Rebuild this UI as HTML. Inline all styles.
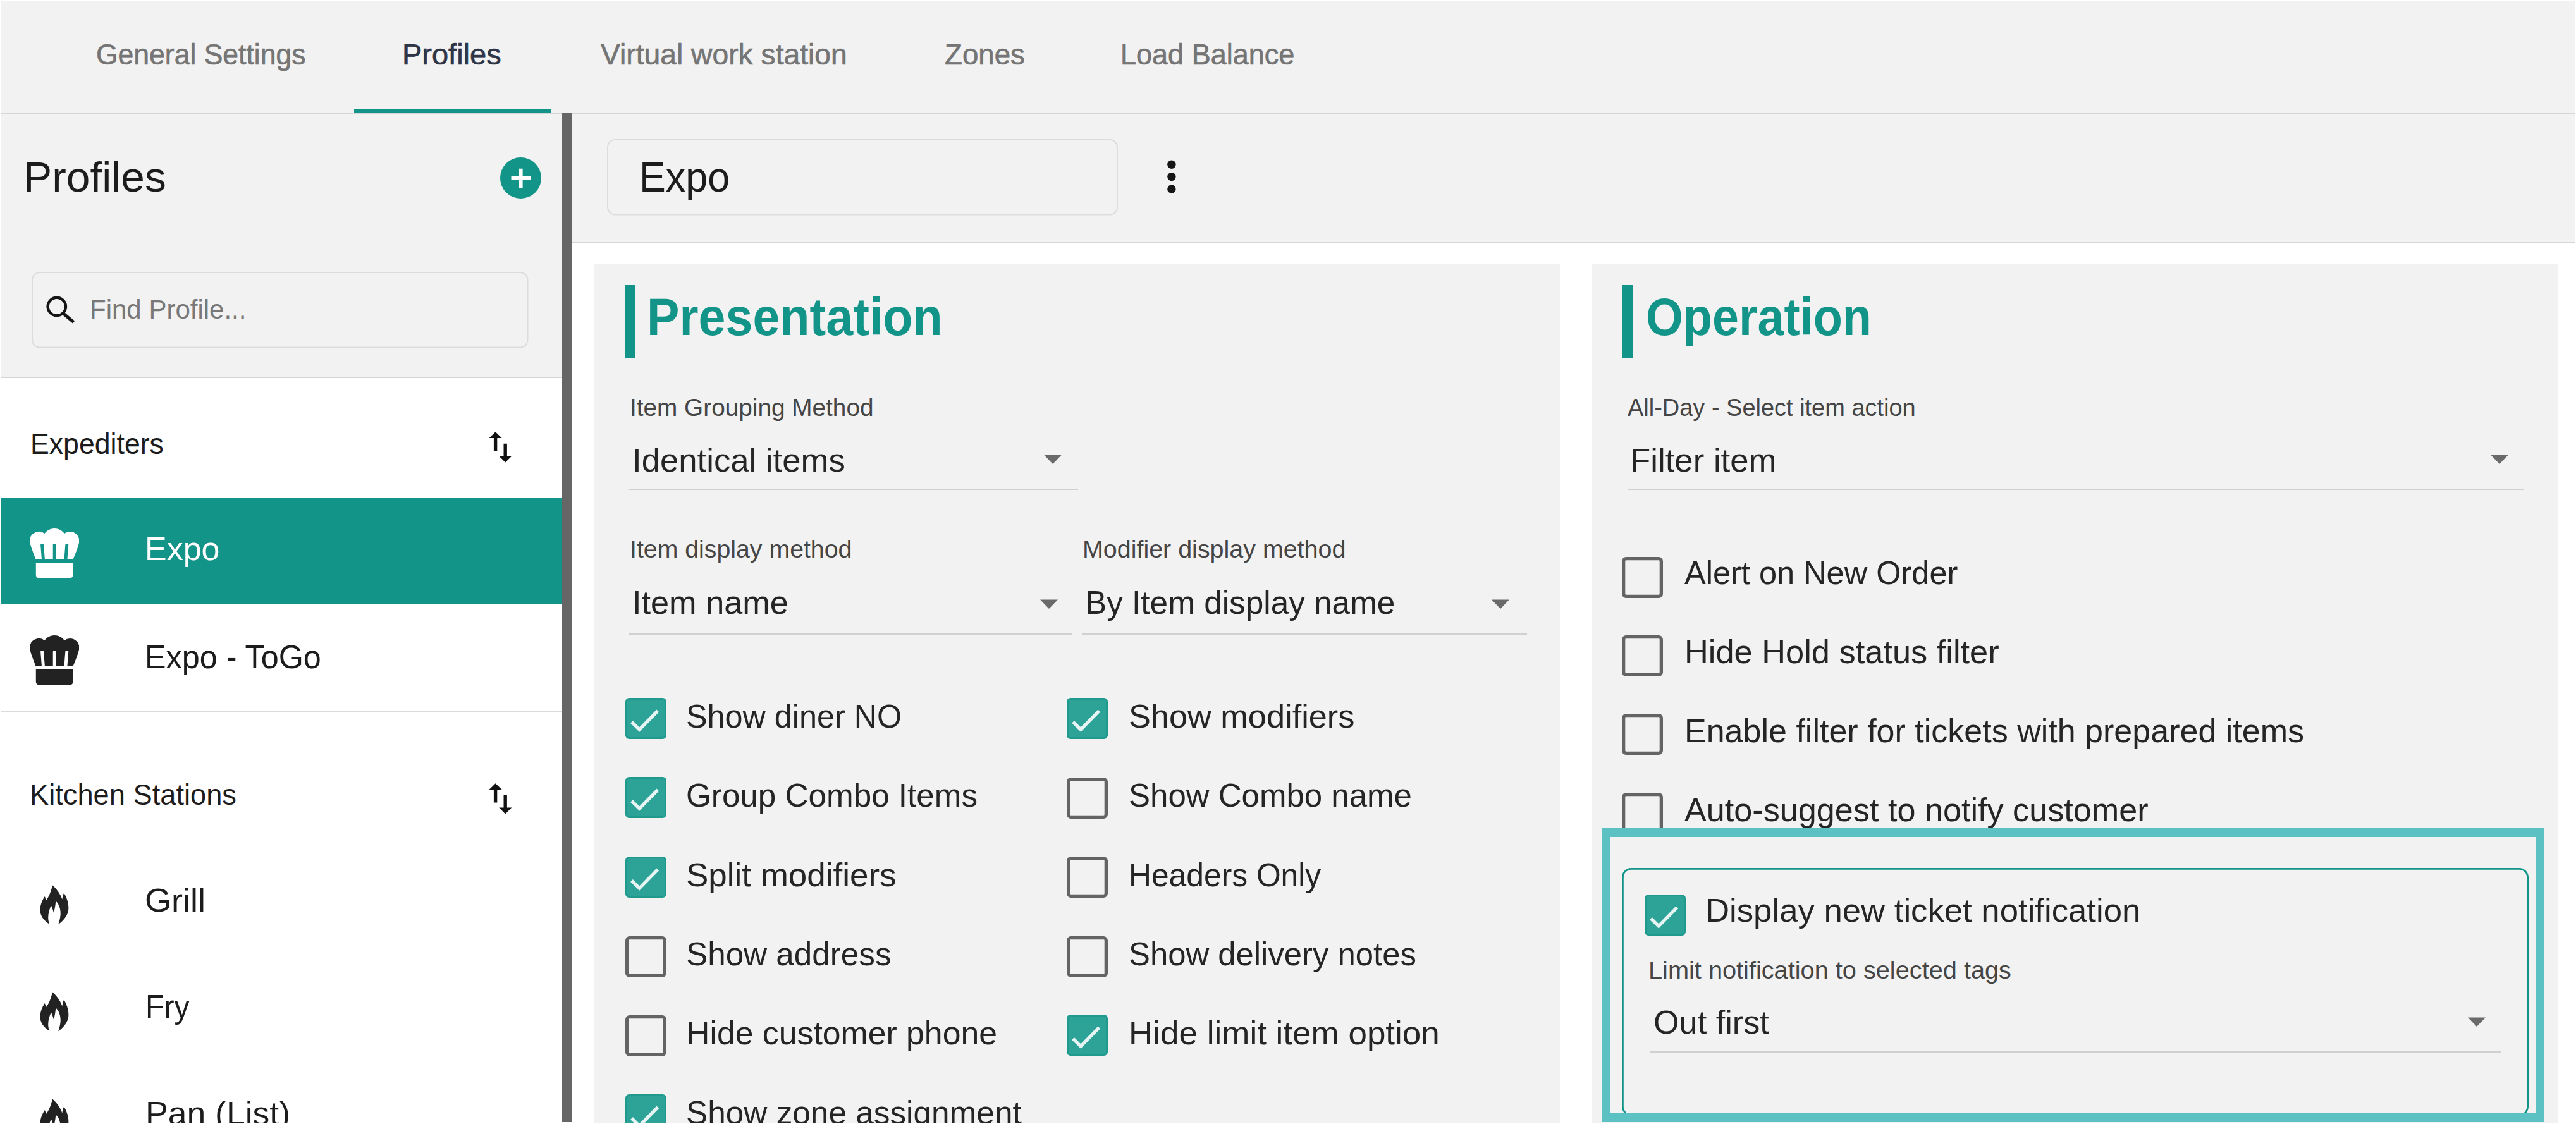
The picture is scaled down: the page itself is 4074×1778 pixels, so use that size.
<!DOCTYPE html>
<html><head><meta charset="utf-8"><title>Profiles</title>
<style>
html,body{margin:0;padding:0;background:#fff;}
body{width:4074px;height:1778px;position:relative;overflow:hidden;font-family:"Liberation Sans",sans-serif;}
.t{position:absolute;white-space:nowrap;line-height:1;transform-origin:0 0;}
</style></head><body>
<div style="position:absolute;left:2px;top:1.2px;width:4070.3px;height:1774px;background:#f2f2f2"></div>
<div style="position:absolute;left:2px;top:178.7px;width:4070px;height:2.7px;background:#d6d6d6"></div>
<div style="position:absolute;left:560px;top:172.7px;width:311px;height:5.6px;background:#129488"></div>
<div style="position:absolute;left:2px;top:598px;width:887px;height:1177.5px;background:#fff"></div>
<div style="position:absolute;left:2px;top:595.7px;width:887px;height:2.7px;background:#d6d6d6"></div>
<div style="position:absolute;left:904px;top:385px;width:3168px;height:1390.5px;background:#fff"></div>
<div style="position:absolute;left:904px;top:382.7px;width:3168px;height:2.7px;background:#d6d6d6"></div>
<div style="position:absolute;left:889px;top:178.4px;width:14.8px;height:1597.1px;background:#666"></div>
<div style="position:absolute;left:939.6px;top:418px;width:1527.9px;height:1357.5px;background:#f2f2f2"></div>
<div style="position:absolute;left:2518.4px;top:418px;width:1528.1px;height:1357.5px;background:#f2f2f2"></div>
<svg style="position:absolute;left:791.3px;top:249px" width="65" height="65" viewBox="0 0 65 65"><circle cx="32.5" cy="32.5" r="32.5" fill="#129488"/><path d="M17.5 32.8h30.5M32.8 17.8v30.5" stroke="#fff" stroke-width="5.6" fill="none"/></svg>
<svg style="position:absolute;left:48.5px;top:429px" width="787.5" height="122.5" viewBox="-1 -1 787.5 122.5"><rect x="1.0" y="1.0" width="783.5" height="118.5" rx="12" fill="none" stroke="#dcdcdc" stroke-width="2"/></svg>
<svg style="position:absolute;left:70px;top:465px" width="52" height="50" viewBox="70 465 52 50"><circle cx="89.8" cy="485" r="14.2" fill="none" stroke="#151515" stroke-width="4.4"/><path d="M100.3 496L116.6 509.6" stroke="#151515" stroke-width="5" fill="none"/></svg>
<div style="position:absolute;left:2px;top:788px;width:887px;height:168px;background:#129488"></div>
<div style="position:absolute;left:2px;top:1125px;width:887px;height:2px;background:#dcdcdc"></div>
<svg style="position:absolute;left:770px;top:680px" width="44" height="52" viewBox="770 680 44 52"><path d="M783.6 683.2L793.6 693H786.3V713.5H780.9V693H773.6Z M799.2 731.6L789.2 721.6H796.5V701.8H801.9V721.6H809.2Z" fill="#111"/></svg>
<svg style="position:absolute;left:770px;top:1235.8px" width="44" height="52" viewBox="770 680 44 52"><path d="M783.6 683.2L793.6 693H786.3V713.5H780.9V693H773.6Z M799.2 731.6L789.2 721.6H796.5V701.8H801.9V721.6H809.2Z" fill="#111"/></svg>
<svg style="position:absolute;left:47.1px;top:835.6px" width="78.4" height="78.4" viewBox="0 0 512 512"><path d="M416 32a95.17 95.17 0 0 0-57.73 19.74C334.93 20.5 298 0 256 0s-78.93 20.5-102.27 51.74A95.56 95.56 0 0 0 0 128c0 41.74 64 192 64 192h60.09L112 169.25a8 8 0 0 1 7.33-8.61l16-1.28a8 8 0 0 1 8.61 7.33L156.2 320H240V168a8 8 0 0 1 8-8h16a8 8 0 0 1 8 8v152h83.8l12.27-153.31a8 8 0 0 1 8.61-7.33l16 1.28a8 8 0 0 1 7.33 8.61L387.91 320H448s64-150.26 64-192a96 96 0 0 0-96-96zM64 480a32 32 0 0 0 32 32h320a32 32 0 0 0 32-32V352H64z" fill="#fff"/></svg>
<svg style="position:absolute;left:47.1px;top:1004.7px" width="78.4" height="78.4" viewBox="0 0 512 512"><path d="M416 32a95.17 95.17 0 0 0-57.73 19.74C334.93 20.5 298 0 256 0s-78.93 20.5-102.27 51.74A95.56 95.56 0 0 0 0 128c0 41.74 64 192 64 192h60.09L112 169.25a8 8 0 0 1 7.33-8.61l16-1.28a8 8 0 0 1 8.61 7.33L156.2 320H240V168a8 8 0 0 1 8-8h16a8 8 0 0 1 8 8v152h83.8l12.27-153.31a8 8 0 0 1 8.61-7.33l16 1.28a8 8 0 0 1 7.33 8.61L387.91 320H448s64-150.26 64-192a96 96 0 0 0-96-96zM64 480a32 32 0 0 0 32 32h320a32 32 0 0 0 32-32V352H64z" fill="#222"/></svg>
<svg style="position:absolute;left:63px;top:1400.3px" width="46.5" height="63.5" viewBox="372 224 522 714"><path d="M595 228 C640 270 700 330 740 410 C755 440 765 465 768 480 C775 440 785 400 800 365 C840 430 880 520 882 620 C884 720 840 820 700 925 C730 840 745 760 738 690 C730 610 700 550 655 508 C650 570 640 650 618 712 C605 670 590 620 572 588 C545 650 520 730 520 800 C520 850 530 890 545 922 C440 860 372 760 376 660 C380 570 420 480 460 425 C468 450 478 472 490 492 C530 430 575 340 595 228Z" fill="#222"/></svg>
<svg style="position:absolute;left:63px;top:1568.8999999999999px" width="46.5" height="63.5" viewBox="372 224 522 714"><path d="M595 228 C640 270 700 330 740 410 C755 440 765 465 768 480 C775 440 785 400 800 365 C840 430 880 520 882 620 C884 720 840 820 700 925 C730 840 745 760 738 690 C730 610 700 550 655 508 C650 570 640 650 618 712 C605 670 590 620 572 588 C545 650 520 730 520 800 C520 850 530 890 545 922 C440 860 372 760 376 660 C380 570 420 480 460 425 C468 450 478 472 490 492 C530 430 575 340 595 228Z" fill="#222"/></svg>
<svg style="position:absolute;left:63px;top:1737.5px" width="46.5" height="63.5" viewBox="372 224 522 714"><path d="M595 228 C640 270 700 330 740 410 C755 440 765 465 768 480 C775 440 785 400 800 365 C840 430 880 520 882 620 C884 720 840 820 700 925 C730 840 745 760 738 690 C730 610 700 550 655 508 C650 570 640 650 618 712 C605 670 590 620 572 588 C545 650 520 730 520 800 C520 850 530 890 545 922 C440 860 372 760 376 660 C380 570 420 480 460 425 C468 450 478 472 490 492 C530 430 575 340 595 228Z" fill="#222"/></svg>
<svg style="position:absolute;left:959.2px;top:219px" width="810" height="122.5" viewBox="-1 -1 810 122.5"><rect x="1.0" y="1.0" width="806" height="118.5" rx="12" fill="none" stroke="#dcdcdc" stroke-width="2"/></svg>
<svg style="position:absolute;left:1840px;top:250px" width="26" height="60" viewBox="1840 250 26 60"><circle cx="1852.9" cy="260.3" r="6.7" fill="#161616"/><circle cx="1852.9" cy="279.6" r="6.7" fill="#161616"/><circle cx="1852.9" cy="299" r="6.7" fill="#161616"/></svg>
<div style="position:absolute;left:989px;top:451px;width:15.5px;height:114.5px;background:#129488"></div>
<div style="position:absolute;left:2565px;top:451px;width:17.5px;height:114.5px;background:#129488"></div>
<div style="position:absolute;left:995px;top:773.3px;width:709.5999999999999px;height:2px;background:#d0d0d0"></div><svg style="position:absolute;left:1650px;top:719px" width="30" height="16" viewBox="0 0 30 16"><path d="M1 0.5H29L15 15Z" fill="#6a6a6a"/></svg>
<div style="position:absolute;left:995px;top:1002.3px;width:701px;height:2px;background:#d0d0d0"></div><svg style="position:absolute;left:1643.5px;top:948px" width="30" height="16" viewBox="0 0 30 16"><path d="M1 0.5H29L15 15Z" fill="#6a6a6a"/></svg>
<div style="position:absolute;left:1711px;top:1002.3px;width:703.5px;height:2px;background:#d0d0d0"></div><svg style="position:absolute;left:2358px;top:948px" width="30" height="16" viewBox="0 0 30 16"><path d="M1 0.5H29L15 15Z" fill="#6a6a6a"/></svg>
<div style="position:absolute;left:2574px;top:773.3px;width:1416.5px;height:2px;background:#d0d0d0"></div><svg style="position:absolute;left:3938px;top:719px" width="30" height="16" viewBox="0 0 30 16"><path d="M1 0.5H29L15 15Z" fill="#6a6a6a"/></svg>
<div style="position:absolute;left:2610px;top:1662.8px;width:1344.8000000000002px;height:2px;background:#d0d0d0"></div><svg style="position:absolute;left:3902px;top:1608.5px" width="30" height="16" viewBox="0 0 30 16"><path d="M1 0.5H29L15 15Z" fill="#6a6a6a"/></svg>
<svg style="position:absolute;left:989.4px;top:1104.1px" width="65" height="65" viewBox="0 0 65 65"><rect x="1.5" y="1.5" width="62" height="62" rx="4.5" fill="#2da397" stroke="#1f9a8d" stroke-width="3"/><path d="M10 38L22.2 50L51.3 20.3" stroke="#e6f5f3" stroke-width="5.3" fill="none"/></svg>
<svg style="position:absolute;left:989.4px;top:1229.3999999999999px" width="65" height="65" viewBox="0 0 65 65"><rect x="1.5" y="1.5" width="62" height="62" rx="4.5" fill="#2da397" stroke="#1f9a8d" stroke-width="3"/><path d="M10 38L22.2 50L51.3 20.3" stroke="#e6f5f3" stroke-width="5.3" fill="none"/></svg>
<svg style="position:absolute;left:989.4px;top:1354.6999999999998px" width="65" height="65" viewBox="0 0 65 65"><rect x="1.5" y="1.5" width="62" height="62" rx="4.5" fill="#2da397" stroke="#1f9a8d" stroke-width="3"/><path d="M10 38L22.2 50L51.3 20.3" stroke="#e6f5f3" stroke-width="5.3" fill="none"/></svg>
<svg style="position:absolute;left:988.4px;top:1479.5px" width="67" height="67" viewBox="-1 -1 67 67"><rect x="2.65" y="2.65" width="59.7" height="59.7" rx="4" fill="none" stroke="#646464" stroke-width="5.3"/></svg>
<svg style="position:absolute;left:988.4px;top:1604.8px" width="67" height="67" viewBox="-1 -1 67 67"><rect x="2.65" y="2.65" width="59.7" height="59.7" rx="4" fill="none" stroke="#646464" stroke-width="5.3"/></svg>
<svg style="position:absolute;left:989.4px;top:1730.6px" width="65" height="65" viewBox="0 0 65 65"><rect x="1.5" y="1.5" width="62" height="62" rx="4.5" fill="#2da397" stroke="#1f9a8d" stroke-width="3"/><path d="M10 38L22.2 50L51.3 20.3" stroke="#e6f5f3" stroke-width="5.3" fill="none"/></svg>
<svg style="position:absolute;left:1687px;top:1104.1px" width="65" height="65" viewBox="0 0 65 65"><rect x="1.5" y="1.5" width="62" height="62" rx="4.5" fill="#2da397" stroke="#1f9a8d" stroke-width="3"/><path d="M10 38L22.2 50L51.3 20.3" stroke="#e6f5f3" stroke-width="5.3" fill="none"/></svg>
<svg style="position:absolute;left:1686px;top:1228.8999999999999px" width="67" height="67" viewBox="-1 -1 67 67"><rect x="2.65" y="2.65" width="59.7" height="59.7" rx="4" fill="none" stroke="#646464" stroke-width="5.3"/></svg>
<svg style="position:absolute;left:1686px;top:1354.1999999999998px" width="67" height="67" viewBox="-1 -1 67 67"><rect x="2.65" y="2.65" width="59.7" height="59.7" rx="4" fill="none" stroke="#646464" stroke-width="5.3"/></svg>
<svg style="position:absolute;left:1686px;top:1479.5px" width="67" height="67" viewBox="-1 -1 67 67"><rect x="2.65" y="2.65" width="59.7" height="59.7" rx="4" fill="none" stroke="#646464" stroke-width="5.3"/></svg>
<svg style="position:absolute;left:1687px;top:1605.3px" width="65" height="65" viewBox="0 0 65 65"><rect x="1.5" y="1.5" width="62" height="62" rx="4.5" fill="#2da397" stroke="#1f9a8d" stroke-width="3"/><path d="M10 38L22.2 50L51.3 20.3" stroke="#e6f5f3" stroke-width="5.3" fill="none"/></svg>
<svg style="position:absolute;left:2564px;top:879.6px" width="67" height="67" viewBox="-1 -1 67 67"><rect x="2.65" y="2.65" width="59.7" height="59.7" rx="4" fill="none" stroke="#646464" stroke-width="5.3"/></svg>
<svg style="position:absolute;left:2564px;top:1004.0px" width="67" height="67" viewBox="-1 -1 67 67"><rect x="2.65" y="2.65" width="59.7" height="59.7" rx="4" fill="none" stroke="#646464" stroke-width="5.3"/></svg>
<svg style="position:absolute;left:2564px;top:1128.4px" width="67" height="67" viewBox="-1 -1 67 67"><rect x="2.65" y="2.65" width="59.7" height="59.7" rx="4" fill="none" stroke="#646464" stroke-width="5.3"/></svg>
<svg style="position:absolute;left:2564px;top:1252.8000000000002px" width="67" height="67" viewBox="-1 -1 67 67"><rect x="2.65" y="2.65" width="59.7" height="59.7" rx="4" fill="none" stroke="#646464" stroke-width="5.3"/></svg>
<svg style="position:absolute;left:2564px;top:1372.3px" width="1436" height="394.5" viewBox="-1 -1 1436 394.5"><rect x="1.4" y="1.4" width="1431.2" height="389.7" rx="13.5" fill="none" stroke="#129488" stroke-width="2.8"/></svg>
<svg style="position:absolute;left:2601px;top:1415px" width="65" height="65" viewBox="0 0 65 65"><rect x="1.5" y="1.5" width="62" height="62" rx="4.5" fill="#2da397" stroke="#1f9a8d" stroke-width="3"/><path d="M10 38L22.2 50L51.3 20.3" stroke="#e6f5f3" stroke-width="5.3" fill="none"/></svg>
<span class="t" style="left:151.91px;top:61.71px;font-size:47px;color:#757575;font-weight:400;transform:scaleX(0.9468);-webkit-text-stroke:0.7px #757575">General Settings</span>
<span class="t" style="left:635.83px;top:61.71px;font-size:47px;color:#2e3547;font-weight:400;transform:scaleX(0.9995);-webkit-text-stroke:0.7px #2e3547">Profiles</span>
<span class="t" style="left:950.30px;top:61.71px;font-size:47px;color:#757575;font-weight:400;transform:scaleX(0.9838);-webkit-text-stroke:0.7px #757575">Virtual work station</span>
<span class="t" style="left:1493.57px;top:61.71px;font-size:47px;color:#757575;font-weight:400;transform:scaleX(0.9711);-webkit-text-stroke:0.7px #757575">Zones</span>
<span class="t" style="left:1772.48px;top:61.71px;font-size:47px;color:#757575;font-weight:400;transform:scaleX(0.9578);-webkit-text-stroke:0.7px #757575">Load Balance</span>
<span class="t" style="left:37.01px;top:245.98px;font-size:67px;color:#1c1c1c;font-weight:400;transform:scaleX(1.0112)">Profiles</span>
<span class="t" style="left:141.72px;top:467.60px;font-size:43px;color:#787878;font-weight:400;transform:scaleX(0.9769)">Find Profile...</span>
<span class="t" style="left:47.51px;top:677.51px;font-size:47px;color:#1c1c1c;font-weight:400;transform:scaleX(0.9497)">Expediters</span>
<span class="t" style="left:229.14px;top:841.68px;font-size:52px;color:#ffffff;font-weight:400;transform:scaleX(0.9995)">Expo</span>
<span class="t" style="left:229.27px;top:1012.98px;font-size:52px;color:#1c1c1c;font-weight:400;transform:scaleX(0.9680)">Expo - ToGo</span>
<span class="t" style="left:47.47px;top:1233.21px;font-size:47px;color:#1c1c1c;font-weight:400;transform:scaleX(0.9626)">Kitchen Stations</span>
<span class="t" style="left:229.47px;top:1397.98px;font-size:52px;color:#1c1c1c;font-weight:400;transform:scaleX(1.0398)">Grill</span>
<span class="t" style="left:230.22px;top:1565.98px;font-size:52px;color:#1c1c1c;font-weight:400;transform:scaleX(0.9293)">Fry</span>
<span class="t" style="left:229.82px;top:1734.98px;font-size:52px;color:#1c1c1c;font-weight:400;transform:scaleX(1.0289)">Pan (List)</span>
<span class="t" style="left:1010.50px;top:245.88px;font-size:67px;color:#1c1c1c;font-weight:400;transform:scaleX(0.9367)">Expo</span>
<span class="t" style="left:1022.57px;top:460.36px;font-size:82.5px;color:#129488;font-weight:700;transform:scaleX(0.9359)">Presentation</span>
<span class="t" style="left:996.37px;top:624.56px;font-size:39.5px;color:#454545;font-weight:400;transform:scaleX(0.9809)">Item Grouping Method</span>
<span class="t" style="left:1000.18px;top:702.48px;font-size:52px;color:#252525;font-weight:400;transform:scaleX(1.0132)">Identical items</span>
<span class="t" style="left:996.33px;top:848.56px;font-size:39.5px;color:#454545;font-weight:400;transform:scaleX(0.9941)">Item display method</span>
<span class="t" style="left:1000.22px;top:927.48px;font-size:52px;color:#252525;font-weight:400;transform:scaleX(1.0051)">Item name</span>
<span class="t" style="left:1712.42px;top:848.56px;font-size:39.5px;color:#454545;font-weight:400;transform:scaleX(0.9982)">Modifier display method</span>
<span class="t" style="left:1716.29px;top:927.48px;font-size:52px;color:#252525;font-weight:400;transform:scaleX(0.9865)">By Item display name</span>
<span class="t" style="left:1084.60px;top:1107.18px;font-size:52px;color:#252525;font-weight:400;transform:scaleX(0.9676)">Show diner NO</span>
<span class="t" style="left:1084.60px;top:1232.48px;font-size:52px;color:#252525;font-weight:400;transform:scaleX(0.9847)">Group Combo Items</span>
<span class="t" style="left:1084.60px;top:1357.78px;font-size:52px;color:#252525;font-weight:400;transform:scaleX(1.0184)">Split modifiers</span>
<span class="t" style="left:1084.60px;top:1483.08px;font-size:52px;color:#252525;font-weight:400;transform:scaleX(0.9848)">Show address</span>
<span class="t" style="left:1084.60px;top:1608.38px;font-size:52px;color:#252525;font-weight:400;transform:scaleX(0.9954)">Hide customer phone</span>
<span class="t" style="left:1084.60px;top:1733.68px;font-size:52px;color:#252525;font-weight:400;transform:scaleX(0.9871)">Show zone assignment</span>
<span class="t" style="left:1785.20px;top:1107.18px;font-size:52px;color:#252525;font-weight:400;transform:scaleX(1.0055)">Show modifiers</span>
<span class="t" style="left:1785.20px;top:1232.48px;font-size:52px;color:#252525;font-weight:400;transform:scaleX(0.9807)">Show Combo name</span>
<span class="t" style="left:1785.20px;top:1357.78px;font-size:52px;color:#252525;font-weight:400;transform:scaleX(0.9569)">Headers Only</span>
<span class="t" style="left:1785.20px;top:1483.08px;font-size:52px;color:#252525;font-weight:400;transform:scaleX(0.9775)">Show delivery notes</span>
<span class="t" style="left:1785.20px;top:1608.38px;font-size:52px;color:#252525;font-weight:400;transform:scaleX(1.0190)">Hide limit item option</span>
<span class="t" style="left:2602.64px;top:460.36px;font-size:82.5px;color:#129488;font-weight:700;transform:scaleX(0.9163)">Operation</span>
<span class="t" style="left:2574.00px;top:624.56px;font-size:39.5px;color:#454545;font-weight:400;transform:scaleX(0.9611)">All-Day - Select item action</span>
<span class="t" style="left:2577.88px;top:702.48px;font-size:52px;color:#252525;font-weight:400;transform:scaleX(1.0145)">Filter item</span>
<span class="t" style="left:2663.60px;top:880.08px;font-size:52px;color:#252525;font-weight:400;transform:scaleX(0.9715)">Alert on New Order</span>
<span class="t" style="left:2663.60px;top:1004.98px;font-size:52px;color:#252525;font-weight:400;transform:scaleX(1.0070)">Hide Hold status filter</span>
<span class="t" style="left:2663.60px;top:1129.88px;font-size:52px;color:#252525;font-weight:400;transform:scaleX(1.0003)">Enable filter for tickets with prepared items</span>
<span class="t" style="left:2663.60px;top:1254.78px;font-size:52px;color:#252525;font-weight:400;transform:scaleX(1.0033)">Auto-suggest to notify customer</span>
<span class="t" style="left:2697.38px;top:1414.38px;font-size:52px;color:#252525;font-weight:400;transform:scaleX(1.0134)">Display new ticket notification</span>
<span class="t" style="left:2606.90px;top:1514.56px;font-size:39.5px;color:#454545;font-weight:400;transform:scaleX(1.0054)">Limit notification to selected tags</span>
<span class="t" style="left:2614.55px;top:1590.98px;font-size:52px;color:#252525;font-weight:400;transform:scaleX(1.0041)">Out first</span>
<div style="position:absolute;left:2532.7px;top:1309.8px;width:1463.1000000000004px;height:437.5px;border:14px solid #5cc1c3"></div>
<div style="position:absolute;left:0;top:1775.5px;width:4074px;height:3px;background:#fff"></div>
</body></html>
